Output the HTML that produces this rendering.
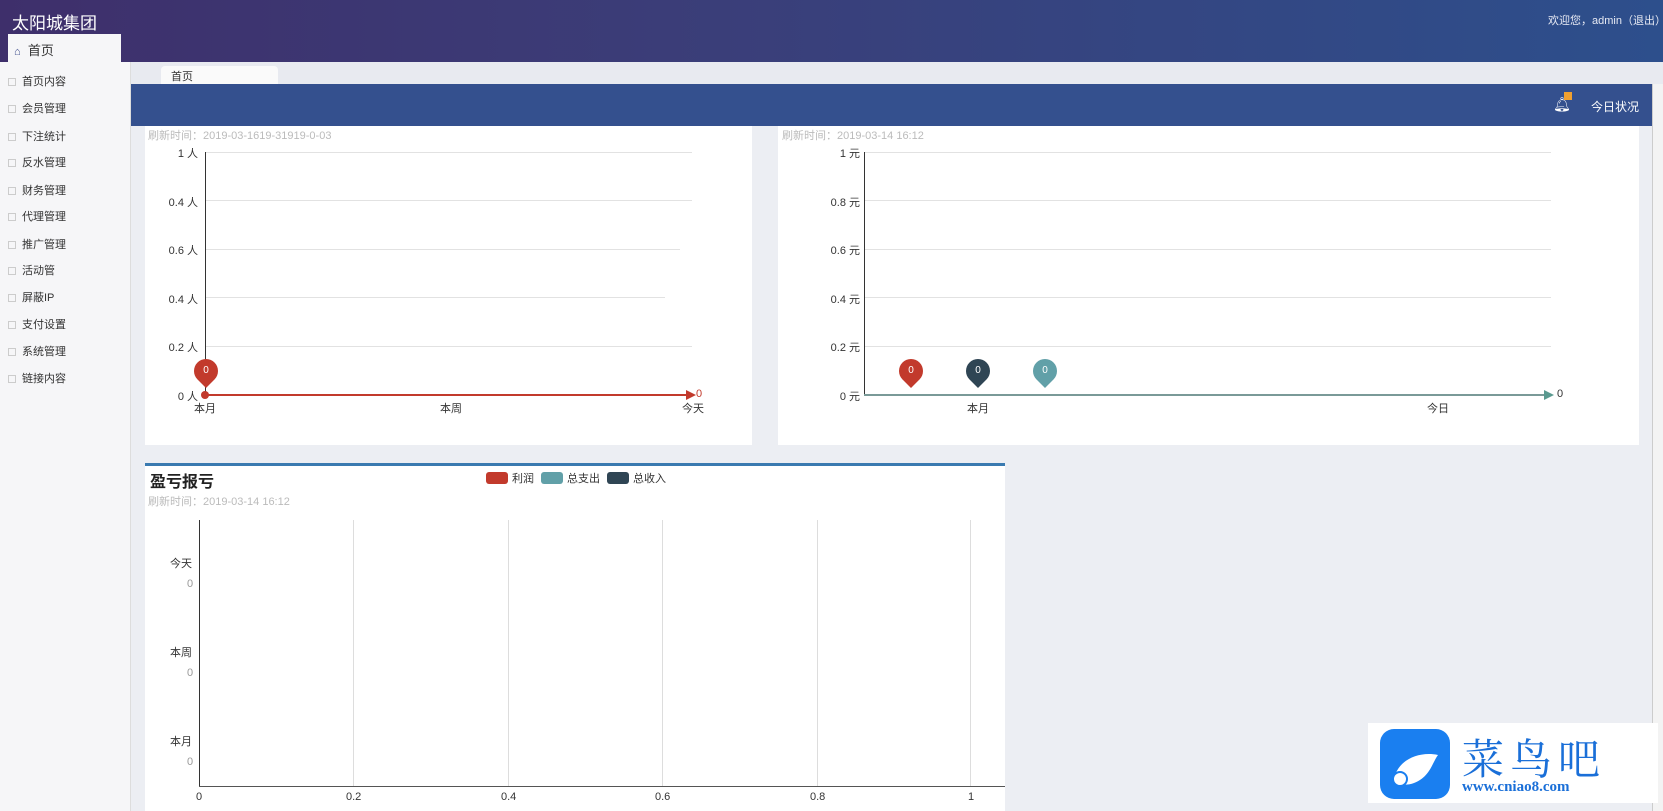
<!DOCTYPE html>
<html><head><meta charset="utf-8">
<style>
*{margin:0;padding:0;box-sizing:border-box}
body{width:1663px;height:811px;overflow:hidden;background:#eceef3;font-family:"Liberation Sans","Noto Sans CJK SC",sans-serif;position:relative;font-size:12px;color:#333}
.abs{position:absolute}
#hdr{left:0;top:0;width:1663px;height:62px;background:linear-gradient(90deg,#3e2f6b 0%,#3b3d78 40%,#2d4f8c 100%)}
#side{left:0;top:62px;width:131px;height:749px;background:#f6f6f8;border-right:1px solid #ddd}
.mi{position:absolute;left:8px;font-size:11px;color:#333}
.mi:before{content:"";display:inline-block;width:6px;height:6px;border:1px solid #ccc;margin-right:6px;vertical-align:middle}
.panel{background:#fff}
.gl{position:absolute;height:1px;background:#e2e2e2}
.yl{position:absolute;font-size:11px;color:#333;text-align:right;width:50px}
.pin{position:absolute;width:24px;height:24px;border-radius:50% 50% 50% 0;transform:rotate(-45deg);}
.pt{position:absolute;color:#fff;font-size:10px;width:24px;text-align:center}
.ts{position:absolute;color:#bbb;font-size:11px}
</style></head><body>
<div id="hdr" class="abs"></div>
<div class="abs" style="left:12px;top:9px;color:#fff;font-size:17px">太阳城集团</div>
<div class="abs" style="left:1548px;top:12px;color:#e6e9f3;font-size:11px">欢迎您，admin（退出）</div>
<div id="side" class="abs"></div>
<div class="abs" style="left:8px;top:34px;width:113px;height:30px;background:#f6f6f8"></div>
<div class="abs" style="left:14px;top:40px;font-size:13px;color:#333"><span style="color:#3b4a8a;font-size:11px">⌂</span>&nbsp; 首页</div>
<div class="mi" style="top:73px">首页内容</div>
<div class="mi" style="top:100px">会员管理</div>
<div class="mi" style="top:128px">下注统计</div>
<div class="mi" style="top:154px">反水管理</div>
<div class="mi" style="top:182px">财务管理</div>
<div class="mi" style="top:208px">代理管理</div>
<div class="mi" style="top:236px">推广管理</div>
<div class="mi" style="top:262px">活动管</div>
<div class="mi" style="top:289px">屏蔽IP</div>
<div class="mi" style="top:316px">支付设置</div>
<div class="mi" style="top:343px">系统管理</div>
<div class="mi" style="top:370px">链接内容</div>
<div class="abs" style="left:131px;top:62px;width:1532px;height:22px;background:#e8eaf0"></div>
<div class="abs" style="left:161px;top:66px;width:117px;height:18px;background:#fafafa;border-radius:4px 4px 0 0;font-size:11px;padding:2px 10px">首页</div>
<div class="abs" style="left:131px;top:84px;width:1521px;height:42px;background:#34508e"></div>
<div class="abs" style="left:1553px;top:96px;color:#fff;font-size:14px">🔔︎</div>
<div class="abs" style="left:1564px;top:92px;width:8px;height:8px;background:#f0a030"></div>
<div class="abs" style="left:1591px;top:98px;color:#fff;font-size:12px">今日状况</div>
<div class="abs" style="left:1652px;top:84px;width:11px;height:727px;background:#f3f3f3;border-left:1px solid #ccc"></div>

<!-- panel 1 -->
<div class="abs panel" style="left:145px;top:126px;width:607px;height:319px"></div>
<div class="ts" style="left:148px;top:127px">刷新时间：2019-03-1619-31919-0-03</div>
<div class="gl" style="left:205px;top:152px;width:487px"></div>
<div class="gl" style="left:205px;top:200px;width:487px"></div>
<div class="gl" style="left:205px;top:249px;width:475px"></div>
<div class="gl" style="left:205px;top:297px;width:460px"></div>
<div class="gl" style="left:205px;top:346px;width:487px"></div>
<div class="abs" style="left:205px;top:152px;width:1px;height:243px;background:#333"></div>
<div class="yl" style="left:148px;top:145px">1 人</div>
<div class="yl" style="left:148px;top:194px">0.4 人</div>
<div class="yl" style="left:148px;top:242px">0.6 人</div>
<div class="yl" style="left:148px;top:291px">0.4 人</div>
<div class="yl" style="left:148px;top:339px">0.2 人</div>
<div class="yl" style="left:148px;top:388px">0 人</div>
<div class="abs" style="left:205px;top:394px;width:484px;height:2px;background:#c23a2c"></div>
<div class="abs" style="left:686px;top:390px;width:0;height:0;border-left:10px solid #c23a2c;border-top:5px solid transparent;border-bottom:5px solid transparent"></div>
<div class="abs" style="left:696px;top:388px;color:#c23a2c;font-size:11px">0</div>
<div class="abs" style="left:201px;top:391px;width:8px;height:8px;border-radius:50%;background:#c23a2c"></div>
<div class="pin" style="left:194px;top:359px;background:#c23a2c"></div>
<div class="pt" style="left:194px;top:365px">0</div>
<div class="abs" style="left:194px;top:400px;font-size:11px">本月</div>
<div class="abs" style="left:440px;top:400px;font-size:11px">本周</div>
<div class="abs" style="left:682px;top:400px;font-size:11px">今天</div>

<!-- panel 2 -->
<div class="abs panel" style="left:778px;top:126px;width:861px;height:319px"></div>
<div class="ts" style="left:782px;top:127px">刷新时间：2019-03-14 16:12</div>
<div class="gl" style="left:864px;top:152px;width:687px"></div>
<div class="gl" style="left:864px;top:200px;width:687px"></div>
<div class="gl" style="left:864px;top:249px;width:687px"></div>
<div class="gl" style="left:864px;top:297px;width:687px"></div>
<div class="gl" style="left:864px;top:346px;width:687px"></div>
<div class="abs" style="left:864px;top:152px;width:1px;height:243px;background:#333"></div>
<div class="yl" style="left:810px;top:145px">1 元</div>
<div class="yl" style="left:810px;top:194px">0.8 元</div>
<div class="yl" style="left:810px;top:242px">0.6 元</div>
<div class="yl" style="left:810px;top:291px">0.4 元</div>
<div class="yl" style="left:810px;top:339px">0.2 元</div>
<div class="yl" style="left:810px;top:388px">0 元</div>
<div class="abs" style="left:864px;top:394px;width:684px;height:2px;background:#7a9a98"></div>
<div class="abs" style="left:1544px;top:390px;width:0;height:0;border-left:10px solid #5a9a90;border-top:5px solid transparent;border-bottom:5px solid transparent"></div>
<div class="abs" style="left:1557px;top:388px;font-size:11px">0</div>
<div class="pin" style="left:899px;top:359px;background:#c23a2c"></div><div class="pt" style="left:899px;top:365px">0</div>
<div class="pin" style="left:966px;top:359px;background:#2f4554"></div><div class="pt" style="left:966px;top:365px">0</div>
<div class="pin" style="left:1033px;top:359px;background:#61a0a8"></div><div class="pt" style="left:1033px;top:365px">0</div>
<div class="abs" style="left:967px;top:400px;font-size:11px">本月</div>
<div class="abs" style="left:1427px;top:400px;font-size:11px">今日</div>

<!-- bottom panel -->
<div class="abs panel" style="left:145px;top:463px;width:860px;height:348px;border-top:3px solid #3a7ab0"></div>
<div class="abs" style="left:150px;top:468px;font-size:16px;font-weight:bold;color:#222">盈亏报亏</div>
<div class="abs" style="left:486px;top:472px;width:22px;height:12px;border-radius:3px;background:#c23a2c"></div>
<div class="abs" style="left:512px;top:470px;font-size:11px">利润</div>
<div class="abs" style="left:541px;top:472px;width:22px;height:12px;border-radius:3px;background:#61a0a8"></div>
<div class="abs" style="left:567px;top:470px;font-size:11px">总支出</div>
<div class="abs" style="left:607px;top:472px;width:22px;height:12px;border-radius:3px;background:#2f4554"></div>
<div class="abs" style="left:633px;top:470px;font-size:11px">总收入</div>
<div class="ts" style="left:148px;top:493px">刷新时间：2019-03-14 16:12</div>
<div class="abs" style="left:199px;top:520px;width:1px;height:266px;background:#333"></div>
<div class="abs" style="left:353px;top:520px;width:1px;height:266px;background:#ddd"></div>
<div class="abs" style="left:508px;top:520px;width:1px;height:266px;background:#ddd"></div>
<div class="abs" style="left:662px;top:520px;width:1px;height:266px;background:#ddd"></div>
<div class="abs" style="left:817px;top:520px;width:1px;height:266px;background:#ddd"></div>
<div class="abs" style="left:970px;top:520px;width:1px;height:266px;background:#ddd"></div>
<div class="abs" style="left:199px;top:786px;width:806px;height:1px;background:#555"></div>
<div class="abs" style="left:196px;top:791px;font-size:11px">0</div>
<div class="abs" style="left:346px;top:791px;font-size:11px">0.2</div>
<div class="abs" style="left:501px;top:791px;font-size:11px">0.4</div>
<div class="abs" style="left:655px;top:791px;font-size:11px">0.6</div>
<div class="abs" style="left:810px;top:791px;font-size:11px">0.8</div>
<div class="abs" style="left:968px;top:791px;font-size:11px">1</div>
<div class="abs" style="left:170px;top:555px;font-size:11px">今天</div>
<div class="abs" style="left:187px;top:578px;font-size:11px;color:#999">0</div>
<div class="abs" style="left:170px;top:644px;font-size:11px">本周</div>
<div class="abs" style="left:187px;top:667px;font-size:11px;color:#999">0</div>
<div class="abs" style="left:170px;top:733px;font-size:11px">本月</div>
<div class="abs" style="left:187px;top:756px;font-size:11px;color:#999">0</div>

<!-- watermark -->
<div class="abs" style="left:1368px;top:723px;width:290px;height:80px;background:#fff"></div>
<div class="abs" style="left:1380px;top:729px;width:70px;height:70px;border-radius:14px;background:#1a7ff0"></div>
<svg class="abs" style="left:1380px;top:729px" width="70" height="70"><path d="M14 50 C18 30 40 22 58 26 C52 34 50 48 34 54 C26 57 18 56 14 50Z" fill="#fff"/><circle cx="20" cy="50" r="7" fill="#fff" stroke="#1a7ff0" stroke-width="2"/></svg>
<div class="abs" style="left:1462px;top:727px;font-size:42px;color:#1a6fd8;font-family:'Liberation Serif','Noto Serif CJK SC',serif;letter-spacing:6px">菜鸟吧</div>
<div class="abs" style="left:1462px;top:779px;font-size:15px;font-weight:bold;color:#1a6fd8;font-family:'Liberation Serif',serif">www.cniao8.com</div>
</body></html>
